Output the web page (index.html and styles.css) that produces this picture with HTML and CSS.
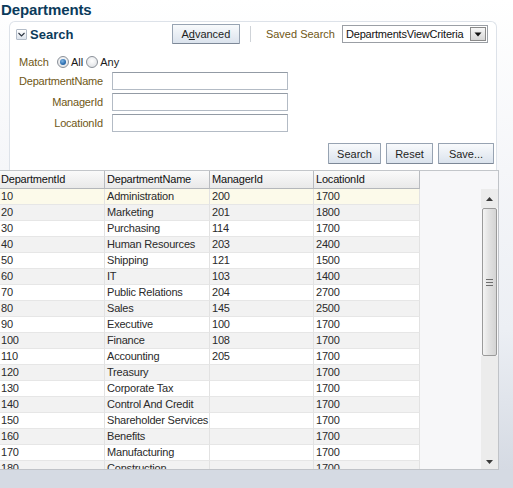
FILE: index.html
```html
<!DOCTYPE html>
<html>
<head>
<meta charset="utf-8">
<link rel="stylesheet" href="styles.css">
</head>
<body>
<div class="title">Departments</div>
<div class="panel">
  <div class="phead">
    <span class="toggle"><svg width="9" height="9" viewBox="0 0 9 9"><polyline points="1.5,3 4.5,6 7.5,3" fill="none" stroke="#2b3440" stroke-width="1.1"/></svg></span>
    <span class="ptitle">Search</span>
    <div class="pright">
      <span class="btn adv">A<u>d</u>vanced</span>
      <span class="sep"></span>
      <span class="lbl saved">Saved Search</span>
      <div class="select">
        <span class="seltext">DepartmentsViewCriteria</span>
        <span class="dd"><svg width="8" height="5" viewBox="0 0 8 5"><polygon points="0.5,0.5 7.5,0.5 4,4.5" fill="#111"/></svg></span>
      </div>
    </div>
  </div>
  <div class="match">
    <span class="lbl">Match</span>
    <span class="radio on"></span><span class="rtext">All</span>
    <span class="radio"></span><span class="rtext">Any</span>
  </div>
  <div class="form">
    <span class="lbl flbl">DepartmentName</span><span class="input"></span>
    <span class="lbl flbl">ManagerId</span><span class="input"></span>
    <span class="lbl flbl">LocationId</span><span class="input"></span>
  </div>
  <div class="actions">
    <span class="btn b-search">Search</span>
    <span class="btn b-reset">Reset</span>
    <span class="btn b-save">Save...</span>
  </div>
</div>
<div class="table">
  <div class="grid">
    <div class="row head"><span>DepartmentId</span><span>DepartmentName</span><span>ManagerId</span><span>LocationId</span></div>
    <div class="body">
      <div class="row sel"><span>10</span><span>Administration</span><span>200</span><span>1700</span></div>
      <div class="row alt"><span>20</span><span>Marketing</span><span>201</span><span>1800</span></div>
      <div class="row"><span>30</span><span>Purchasing</span><span>114</span><span>1700</span></div>
      <div class="row alt"><span>40</span><span>Human Resources</span><span>203</span><span>2400</span></div>
      <div class="row"><span>50</span><span>Shipping</span><span>121</span><span>1500</span></div>
      <div class="row alt"><span>60</span><span>IT</span><span>103</span><span>1400</span></div>
      <div class="row"><span>70</span><span>Public Relations</span><span>204</span><span>2700</span></div>
      <div class="row alt"><span>80</span><span>Sales</span><span>145</span><span>2500</span></div>
      <div class="row"><span>90</span><span>Executive</span><span>100</span><span>1700</span></div>
      <div class="row alt"><span>100</span><span>Finance</span><span>108</span><span>1700</span></div>
      <div class="row"><span>110</span><span>Accounting</span><span>205</span><span>1700</span></div>
      <div class="row alt"><span>120</span><span>Treasury</span><span></span><span>1700</span></div>
      <div class="row"><span>130</span><span>Corporate Tax</span><span></span><span>1700</span></div>
      <div class="row alt"><span>140</span><span>Control And Credit</span><span></span><span>1700</span></div>
      <div class="row"><span>150</span><span>Shareholder Services</span><span></span><span>1700</span></div>
      <div class="row alt"><span>160</span><span>Benefits</span><span></span><span>1700</span></div>
      <div class="row"><span>170</span><span>Manufacturing</span><span></span><span>1700</span></div>
      <div class="row alt"><span>180</span><span>Construction</span><span></span><span>1700</span></div>
      <div class="row"><span>190</span><span>Contracting</span><span></span><span>1700</span></div>
    </div>
  </div>
  <div class="scroll">
    <div class="sb-up"><svg width="7" height="4" viewBox="0 0 7 4"><polygon points="0,4 7,4 3.5,0" fill="#3a3a3a"/></svg></div>
    <div class="sb-thumb"><span></span><span></span><span></span></div>
    <div class="sb-track"></div>
    <div class="sb-down"><svg width="7" height="4" viewBox="0 0 7 4"><polygon points="0,0 7,0 3.5,4" fill="#3a3a3a"/></svg></div>
  </div>
</div>
</body>
</html>
```

FILE: styles.css
```css
html, body {
  margin: 0;
  padding: 0;
}
body {
  width: 513px;
  height: 488px;
  overflow: hidden;
  font-family: "Liberation Sans", Arial, sans-serif;
  font-size: 11px;
  color: #222;
  background: linear-gradient(to bottom, #ffffff 0px, #f5f6f9 170px, #eceff4 330px, #d5dae3 470px, #d5dae3 488px);
}
.title {
  height: 21px;
  line-height: 19px;
  padding-left: 1px;
  font-size: 15px;
  font-weight: bold;
  color: #0b3b5b;
  letter-spacing: -0.1px;
}
.panel {
  box-sizing: border-box;
  width: 488px;
  height: 149px;
  margin-left: 9px;
  border: 1px solid #dde2e9;
  border-bottom: none;
  border-radius: 6px 6px 0 0;
  background: #fff;
  padding-top: 2px;
}
.phead {
  display: flex;
  align-items: center;
  height: 20px;
  padding-left: 6px;
}
.toggle {
  box-sizing: border-box;
  width: 11px;
  height: 11px;
  border: 1px solid #b3bcc8;
  border-radius: 1px;
  background: linear-gradient(#ffffff, #dce3ec);
  display: flex;
  align-items: center;
  justify-content: center;
  margin-right: 3px;
  margin-top: 1px;
}
.ptitle {
  font-size: 13px;
  font-weight: bold;
  color: #0b3b5b;
}
.pright {
  margin-left: auto;
  padding-right: 8px;
  display: flex;
  align-items: center;
  height: 20px;
}
.btn {
  box-sizing: border-box;
  display: inline-flex;
  align-items: center;
  justify-content: center;
  border: 1px solid #97a3b2;
  border-bottom-color: #7d8897;
  border-radius: 1px;
  background: linear-gradient(#f8fafc, #dbe3ed);
  color: #1e1e1e;
  font-size: 11px;
}
.adv {
  width: 68px;
  height: 20px;
}
.adv u {
  text-decoration: underline;
}
.sep {
  width: 1px;
  height: 16px;
  background: #cfd3d8;
  margin-left: 10px;
  margin-right: 15px;
}
.lbl {
  color: #6f5816;
}
.saved {
  margin-right: 7px;
}
.select {
  box-sizing: border-box;
  width: 146px;
  height: 18px;
  border: 1px solid #9b9fa5;
  background: #fff;
  display: flex;
  align-items: center;
  padding-left: 3px;
  padding-right: 1px;
}
.seltext {
  flex: 1;
  color: #111;
  letter-spacing: -0.2px;
  white-space: nowrap;
}
.dd {
  box-sizing: border-box;
  width: 16px;
  height: 14px;
  border: 1px solid #8a8a8a;
  background: linear-gradient(#f7f7f7, #d6d6d6);
  display: flex;
  align-items: center;
  justify-content: center;
}
.match {
  display: flex;
  align-items: center;
  height: 14px;
  margin-top: 11px;
  padding-left: 9px;
}
.match .lbl {
  margin-right: 8px;
}
.radio {
  box-sizing: border-box;
  width: 12px;
  height: 12px;
  border-radius: 50%;
  border: 1px solid #8b9199;
  background: radial-gradient(circle at 50% 40%, #ffffff 0%, #e4e6e9 70%, #cfd3d8 100%);
  position: relative;
}
.radio.on::after {
  content: "";
  position: absolute;
  left: 2px;
  top: 2px;
  width: 6px;
  height: 6px;
  border-radius: 50%;
  background: radial-gradient(circle at 40% 35%, #7fb6e6 0%, #2a6cae 60%, #1a4f86 100%);
}
.rtext {
  margin-left: 2px;
  margin-right: 3px;
  color: #1a1a1a;
}
.form {
  display: grid;
  grid-template-columns: 94px 176px;
  column-gap: 8px;
  row-gap: 3px;
  margin-top: 3px;
  align-items: center;
}
.flbl {
  text-align: right;
  padding-right: 1px;
  letter-spacing: -0.2px;
}
.input {
  box-sizing: border-box;
  height: 18px;
  border: 1px solid #b3bbc5;
  border-top-color: #939ba5;
  background: #fff;
}
.actions {
  display: flex;
  justify-content: flex-end;
  gap: 5px;
  margin-top: 11px;
  padding-right: 2px;
}
.actions .btn {
  height: 21px;
}
.b-search { width: 53px; }
.b-reset { width: 47px; }
.b-save { width: 56px; }

.table {
  box-sizing: border-box;
  width: 499px;
  height: 300px;
  border-top: 1px solid #c3c6ca;
  border-right: 1px solid #c0c3c8;
  border-bottom: 1px solid #c0c3c8;
  background: #f7f7f9;
  display: flex;
}
.grid {
  width: 481px;
  height: 298px;
  overflow: hidden;
}
.row {
  display: grid;
  grid-template-columns: 105px 105px 104px 106px;
  width: 420px;
  height: 16px;
}
.row span {
  box-sizing: border-box;
  border-right: 1px solid #e2e2e2;
  border-bottom: 1px solid #e6e6e6;
  padding-left: 2px;
  line-height: 15px;
  white-space: nowrap;
  overflow: hidden;
  color: #2a2a2a;
  letter-spacing: -0.2px;
}
.row span:first-child {
  padding-left: 1px;
}
.row { background: #ffffff; }
.row.alt { background: #f2f2f2; }
.row.sel { background: #fcfaea; }
.row.head {
  height: 18px;
  background: transparent;
}
.row.head span {
  background: linear-gradient(#fafafa, #e9e9e9);
  border-right: 1px solid #b9bcc0;
  border-bottom: 1px solid #b4b7bb;
  line-height: 17px;
  color: #111;
}
.body {
  height: 280px;
  overflow: hidden;
}
.scroll {
  width: 17px;
  padding-top: 18px;
  box-sizing: border-box;
  height: 298px;
  display: flex;
  flex-direction: column;
}
.sb-up, .sb-down {
  height: 18px;
  background: #ececec;
  display: flex;
  align-items: center;
  justify-content: center;
}
.sb-up { height: 19px; }
.sb-thumb {
  box-sizing: border-box;
  height: 148px;
  margin-left: 1px;
  width: 15px;
  border: 1px solid #9a9a9a;
  border-radius: 2px;
  background: linear-gradient(to right, #f4f4f4, #e2e2e2 45%, #d4d4d4 100%);
  display: flex;
  flex-direction: column;
  align-items: center;
  justify-content: center;
  gap: 2px;
}
.sb-thumb span {
  width: 7px;
  height: 1px;
  background: #6e6e6e;
}
.sb-track {
  flex: 1;
  background: #ececec;
}
.sb-down {
  align-items: flex-end;
  padding-bottom: 5px;
  box-sizing: border-box;
}
```
